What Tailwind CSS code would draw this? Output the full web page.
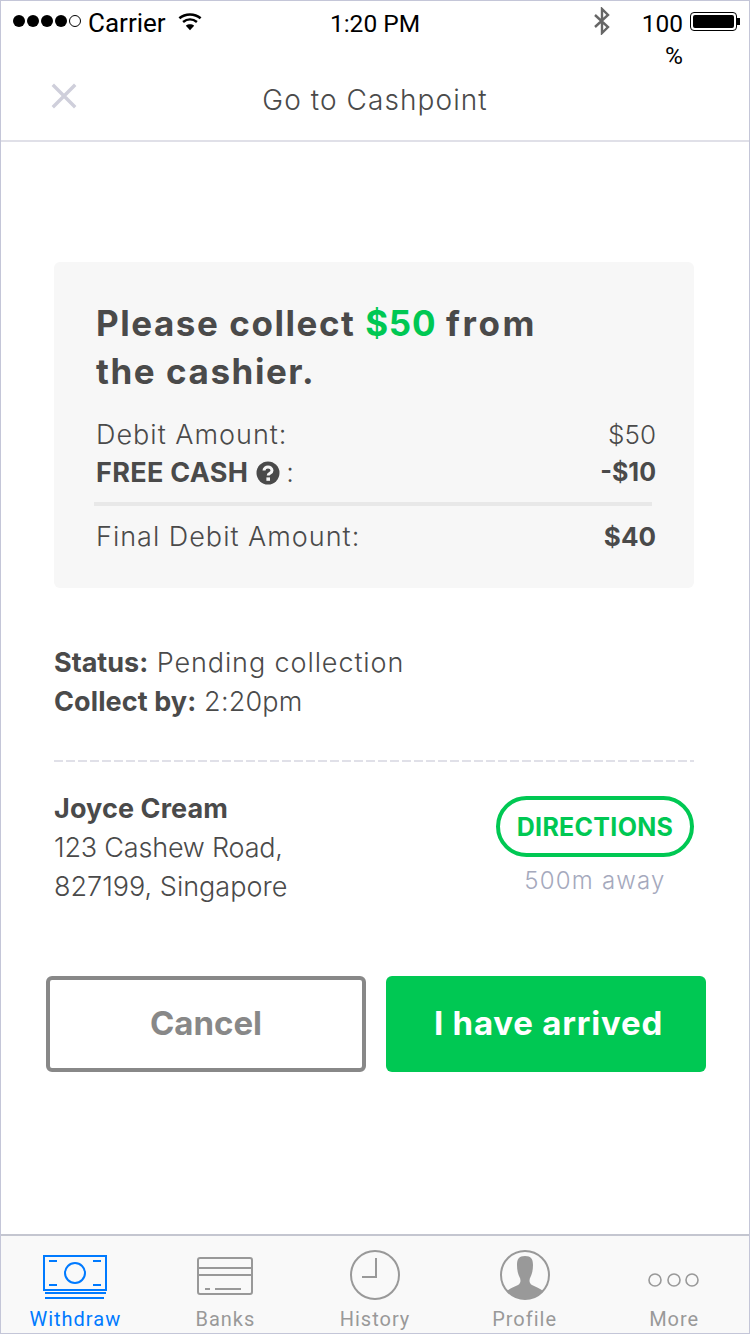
<!DOCTYPE html>
<html lang="en">
<head>
    <meta charset="UTF-8">
    <meta name="viewport" content="width=device-width, initial-scale=1.0">
    <title>Go to Cashpoint</title>
    <script src="https://cdn.jsdelivr.net/npm/@tailwindcss/browser@4"></script>
</head>
<body class="bg-white">
<div class="w-[750px] h-[1334px] flex flex-col border border-[#c4c6d8] bg-white overflow-hidden font-['Inter',sans-serif] text-[#4a4a4a]">

    <!-- Status bar -->
    <div class="h-[44px] flex items-start text-black font-['Roboto',sans-serif] relative shrink-0">
        <div class="flex items-center gap-[2px] ml-[12px] mt-[14px]">
            <span class="w-[12px] h-[12px] rounded-full bg-black"></span>
            <span class="w-[12px] h-[12px] rounded-full bg-black"></span>
            <span class="w-[12px] h-[12px] rounded-full bg-black"></span>
            <span class="w-[12px] h-[12px] rounded-full bg-black"></span>
            <span class="w-[12px] h-[12px] rounded-full border border-black"></span>
        </div>
        <span class="ml-[7px] mt-[6px] text-[26px] leading-[32px]">Carrier</span>
        <svg class="ml-[12px] mt-[11px]" width="24" height="19" viewBox="0 0 26 20" fill="none" stroke="black" stroke-width="2.8">
            <path d="M1.5 6.5C8 1 18 1 24.5 6.5"/>
            <path d="M5.5 10.5C10 7 16 7 20.5 10.5"/>
            <path d="M13 19.5L8.5 14.5C11 12.5 15 12.5 17.5 14.5Z" fill="black" stroke="none"/>
        </svg>
        <span class="absolute left-0 right-0 text-center mt-[7px] text-[24.500px] leading-[32px]">1:20 PM</span>
        <svg class="absolute left-[593px] top-[6px]" width="16" height="28" viewBox="0 0 16 28" fill="none" stroke="#666" stroke-width="2.4">
            <path d="M1 8L14 20L8 26V2L14 8L1 20"/>
        </svg>
        <div class="absolute left-[636px] top-[7px] w-[46px] text-right text-[24.500px] leading-[32px]">100 %</div>
        <div class="absolute left-[689px] top-[11px] flex items-center">
            <div class="w-[47px] h-[19px] border border-black rounded-[4px] p-[2px]">
                <div class="w-full h-full bg-black rounded-[2px]"></div>
            </div>
            <div class="w-[3px] h-[7px] bg-black"></div>
        </div>
    </div>

    <!-- Nav bar -->
    <div class="h-[97px] shrink-0 border-b-2 border-[#e0e0e8] relative flex items-center justify-center">
        <svg class="absolute left-[50px] top-[38px]" width="26" height="26" viewBox="0 0 26 26" stroke="#cfcfdb" stroke-width="3.4" stroke-linecap="square">
            <path d="M3 3L23 23M23 3L3 23"/>
        </svg>
        <h1 class="text-[28px] font-light text-[#4a4a4a] tracking-[1.07px] mt-[14px]">Go to Cashpoint</h1>
    </div>

    <!-- Content -->
    <div class="flex-1 flex flex-col">
        <div class="mt-[120px] ml-[53px] w-[640px] h-[326px] bg-[#f7f7f7] rounded-[6px] pl-[42px] pr-[38px] pt-[37px]">
            <h2 class="text-[35px] leading-[48px] font-bold text-[#4a4a4a] tracking-[1.55px]">Please collect <span class="text-[#00c853] tracking-[0.7px]">$50</span> <span class="tracking-[2.5px]">from</span><br>the cashier.</h2>
            <div class="mt-[20px] text-[27px] leading-[39px] font-light">
                <div class="flex justify-between"><span class="tracking-[1px]">Debit Amount:</span><span class="text-[26px]">$50</span></div>
                <div class="flex justify-between font-bold -mt-[1px]">
                    <span class="flex items-center tracking-[0.3px]">FREE CASH
                        <svg class="ml-[8px] mr-[6px]" width="24" height="24" viewBox="0 0 24 24">
                            <circle cx="12" cy="12" r="11.5" fill="#4a4a4a"/>
                            <path d="M8 9.5C8 4.8 16 4.8 16 9.5C16 12.5 12.2 12 12.2 14.5" fill="none" stroke="#f7f7f7" stroke-width="3"/>
                            <rect x="10.4" y="16.4" width="3.6" height="3.4" fill="#f7f7f7"/>
                        </svg>
                        <span class="font-light">:</span>
                    </span>
                    <span class="text-[25px]">-$10</span>
                </div>
                <div class="h-[4px] bg-[#e8e8e8] mt-[10px] -ml-[2px] mr-[4px]"></div>
                <div class="flex justify-between mt-[11px]"><span class="tracking-[1px]">Final Debit Amount:</span><span class="font-bold text-[26px]">$40</span></div>
            </div>
        </div>

        <div class="mt-[55px] ml-[53px] text-[27px] leading-[39px] font-light">
            <p class="tracking-[0.9px]"><span class="font-bold tracking-[0px]">Status:</span> Pending collection</p>
            <p class="tracking-[0.2px]"><span class="font-bold tracking-[0.1px]">Collect by:</span> 2:20pm</p>
        </div>

        <div class="mt-[39px] ml-[53px] w-[640px] h-[2px] bg-[repeating-linear-gradient(90deg,#e0e0e8_0,#e0e0e8_9px,transparent_9px,transparent_12px)]"></div>

        <div class="mt-[27px] ml-[53px] w-[640px] flex justify-between">
            <div class="text-[27px] leading-[39px] font-light">
                <p class="font-bold tracking-[0.1px]">Joyce Cream</p>
                <p class="-tracking-[0.2px]">123 Cashew Road,</p>
                <p>827199, Singapore</p>
            </div>
            <div class="flex flex-col items-center mt-[7px]">
                <button class="w-[198px] h-[61px] pt-[3px] rounded-full border-4 border-[#00c853] text-[#00c853] text-[25px] font-bold tracking-[0.3px]">DIRECTIONS</button>
                <span class="text-[24px] leading-[40px] font-light text-[#a5a9bd] mt-[4px] tracking-[1.2px]">500m away</span>
            </div>
        </div>

        <div class="mt-[70px] ml-[45px] flex gap-[20px]">
            <button class="w-[320px] h-[96px] rounded-[6px] border-4 border-[#888888] text-[#888888] text-[33px] font-bold">Cancel</button>
            <button class="w-[320px] h-[96px] pl-[5px] rounded-[6px] bg-[#00c853] text-white text-[33px] font-bold tracking-[0.8px]">I have arrived</button>
        </div>
    </div>

    <!-- Tab bar -->
    <div class="h-[99px] pt-[1px] shrink-0 border-t-2 border-[#c4c6d0] bg-[#f9f9f9] grid grid-cols-5 font-['Roboto',sans-serif] text-[20px] leading-[24px] tracking-[1px] text-[#999999]">
        <div class="flex flex-col items-center text-[#007aff]">
            <div class="h-[70px]">
                <svg class="mt-[17px] -ml-[1px]" width="66" height="46" viewBox="0 0 66 46" fill="none" stroke="#007aff" stroke-width="2">
                    <rect x="2" y="2" width="62" height="34"/>
                    <circle cx="33" cy="19" r="10"/>
                    <path d="M7 7H15M51 7H59M7 31H15M51 31H59"/>
                    <path d="M3 39H64M3 44H62"/>
                </svg>
            </div>
            <span class="-ml-[1px]">Withdraw</span>
        </div>
        <div class="flex flex-col items-center">
            <div class="h-[70px]">
                <svg class="mt-[19px]" width="58" height="40" viewBox="0 0 58 40" fill="none" stroke="#999999" stroke-width="2">
                    <rect x="2" y="2" width="54" height="36" rx="2"/>
                    <path d="M2 12H56M2 19H56M9 33H14M19 33H45"/>
                </svg>
            </div>
            <span>Banks</span>
        </div>
        <div class="flex flex-col items-center">
            <div class="h-[70px]">
                <svg class="mt-[12px]" width="52" height="52" viewBox="0 0 52 52" fill="none" stroke="#999999" stroke-width="2">
                    <circle cx="26" cy="26" r="24"/>
                    <path d="M27 9V28H13"/>
                </svg>
            </div>
            <span>History</span>
        </div>
        <div class="flex flex-col items-center">
            <div class="h-[70px]">
                <svg class="mt-[12px]" width="52" height="52" viewBox="0 0 52 52" fill="none">
                    <circle cx="26" cy="26" r="24" stroke="#999999" stroke-width="2"/>
                    <path d="M26 7C32 7 34 10 34 16C34 21 33 25 31.500 28C30 31 30 34 33 36C37 38 42 40 44 42C39 47 33 49.500 26 49.500C19 49.500 13 47 8 42C10 40 15 38 19 36C22 34 22 31 20.500 28C19 25 18 21 18 16C18 10 20 7 26 7Z" fill="#999999"/>
                </svg>
            </div>
            <span>Profile</span>
        </div>
        <div class="flex flex-col items-center">
            <div class="h-[70px]">
                <svg class="mt-[33px]" width="52" height="20" viewBox="0 0 52 20" fill="none" stroke="#999999" stroke-width="1.6">
                    <circle cx="7" cy="10" r="6"/>
                    <circle cx="26" cy="10" r="6"/>
                    <circle cx="44" cy="10" r="6"/>
                </svg>
            </div>
            <span>More</span>
        </div>
    </div>
</div>
</body>
</html>
